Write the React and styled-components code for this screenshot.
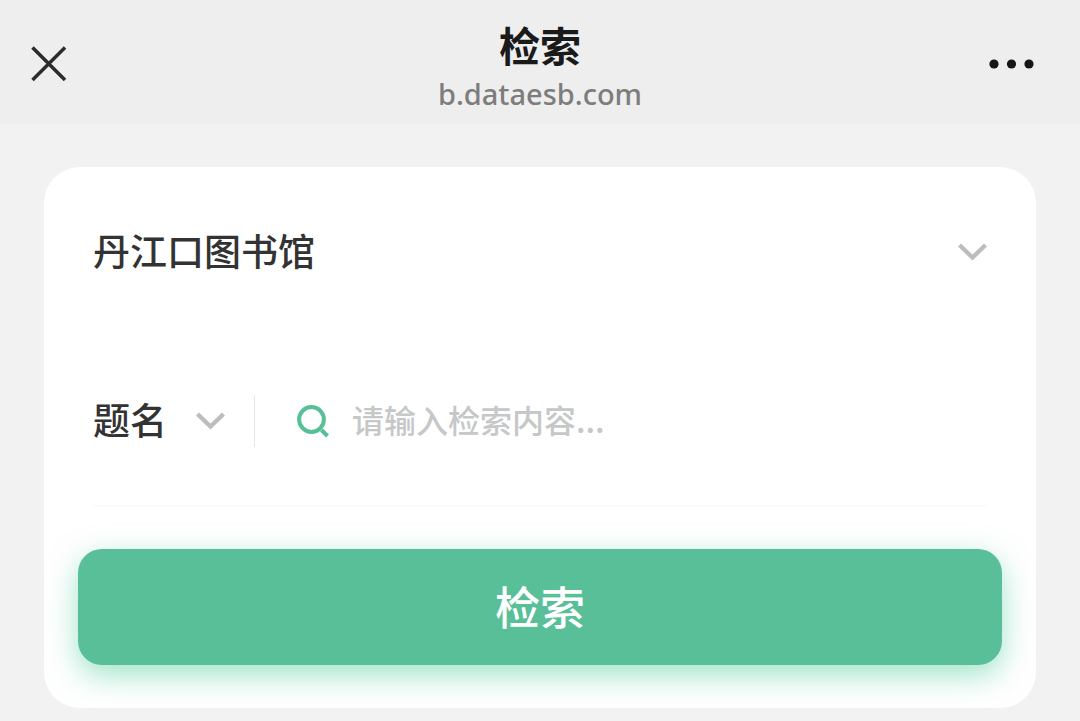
import React, { useState } from 'react';
import styled, { createGlobalStyle, ThemeProvider } from 'styled-components';

const theme = {
  green: '#58bf98',
  text: '#333333',
  muted: '#7d7d7d',
  placeholder: '#c6c8c8',
  arrow: '#bdbdbd',
  page: '#f2f2f2',
  bar: '#eeeeee',
};

const GlobalStyle = createGlobalStyle`
  *, *::before, *::after {
    box-sizing: border-box;
  }
  body {
    margin: 0;
    background-color: ${theme.page};
    color: ${theme.text};
    font-family: 'Noto Sans CJK SC', sans-serif;
    font-weight: 500;
  }
  button, input, select {
    font: inherit;
    color: inherit;
  }
`;

const TopBar = styled.header`
  display: grid;
  grid-template-columns: 1fr auto 1fr;
  align-items: center;
  padding: 18px 30px 14px;
  background-color: ${({ theme }) => theme.bar};
`;

const IconButton = styled.button`
  display: flex;
  justify-self: ${({ $end }) => ($end ? 'end' : 'start')};
  padding: ${({ $end }) => ($end ? '0 15px' : '0')};
  border: none;
  background: none;
  cursor: pointer;
`;

const Heading = styled.div`
  text-align: center;
`;

const Title = styled.h1`
  margin: 0;
  color: #1a1a1a;
  font-size: 41px;
  font-weight: 700;
  line-height: 52px;
`;

const Address = styled.p`
  margin: 8px 0 0;
  color: ${({ theme }) => theme.muted};
  font-family: 'Noto Sans', sans-serif;
  font-size: 29px;
  line-height: 32px;
`;

const Card = styled.form`
  margin: 43px 44px 13px;
  padding: 0 34px 43px;
  border-radius: 36px;
  background-color: #fff;
`;

const Row = styled.div`
  display: flex;
  align-items: center;
  height: 169px;
  margin: 0 15px;
`;

const SearchRow = styled(Row)`
  box-sizing: content-box;
  border-bottom: 2px solid #fafafa;
`;

const SelectLabel = styled.label`
  display: grid;
  flex: ${({ $wide }) => ($wide ? '1' : 'none')};
  align-items: center;

  > * {
    grid-area: 1 / 1;
  }

  svg {
    justify-self: end;
    pointer-events: none;
  }
`;

const Select = styled.select`
  width: 100%;
  margin: 0;
  padding: 0 58px 4px 0;
  border: none;
  outline: none;
  appearance: none;
  background: none;
  font-size: 37px;
  line-height: 54px;
`;

const Separator = styled.span`
  width: 1px;
  height: 52px;
  margin: 0 41px 0 29px;
  background-color: #e6e6e6;
`;

const SearchLabel = styled.label`
  display: flex;
  flex: 1;
  align-items: center;
  gap: 22px;
`;

const SearchInput = styled.input`
  flex: 1;
  min-width: 0;
  padding: 0 0 4px;
  border: none;
  outline: none;
  background: none;
  font-size: 32px;
  line-height: 48px;

  &::placeholder {
    color: ${({ theme }) => theme.placeholder};
    opacity: 1;
  }
`;

const SubmitButton = styled.button`
  display: block;
  width: 100%;
  height: 116px;
  margin-top: 42px;
  padding: 0 0 4px;
  border: none;
  border-radius: 24px;
  background-color: ${({ theme }) => theme.green};
  box-shadow: 0 10px 30px rgba(64, 201, 150, 0.5);
  color: #fff;
  font-size: 45px;
  cursor: pointer;
`;

const CloseIcon = () => (
  <svg width="38" height="38" viewBox="0 0 38 38" fill="none" aria-hidden="true">
    <path d="M2.5 2.5 35 35M35 2.5 2.5 35" stroke="#2b2b2b" strokeWidth="3.5" />
  </svg>
);

const MoreIcon = () => (
  <svg width="46" height="10" viewBox="0 0 46 10" fill="#161616" aria-hidden="true">
    <circle cx="5" cy="5" r="4.6" />
    <circle cx="22.5" cy="5" r="4.6" />
    <circle cx="40" cy="5" r="4.6" />
  </svg>
);

const ArrowIcon = () => (
  <svg width="29" height="20" viewBox="0 0 29 20" fill="none" aria-hidden="true">
    <path d="M1.5 3 14.5 15.5 27.5 3" stroke={theme.arrow} strokeWidth="4.4" />
  </svg>
);

const SearchIcon = () => (
  <svg width="34" height="34" viewBox="0 0 34 34" fill="none" stroke={theme.green} aria-hidden="true">
    <circle cx="15.5" cy="15.5" r="12.4" strokeWidth="4" />
    <path d="M25.5 26 31.5 32" strokeWidth="4.2" />
  </svg>
);

const App = () => {
  const [query, setQuery] = useState('');

  return (
    <ThemeProvider theme={theme}>
      <GlobalStyle />
      <TopBar>
        <IconButton type="button" aria-label="关闭">
          <CloseIcon />
        </IconButton>
        <Heading>
          <Title>检索</Title>
          <Address>b.dataesb.com</Address>
        </Heading>
        <IconButton type="button" aria-label="更多" $end>
          <MoreIcon />
        </IconButton>
      </TopBar>
      <Card onSubmit={(e) => e.preventDefault()}>
        <Row>
          <SelectLabel $wide>
            <Select aria-label="图书馆">
              <option>丹江口图书馆</option>
            </Select>
            <ArrowIcon />
          </SelectLabel>
        </Row>
        <SearchRow>
          <SelectLabel>
            <Select aria-label="检索字段">
              <option>题名</option>
            </Select>
            <ArrowIcon />
          </SelectLabel>
          <Separator />
          <SearchLabel>
            <SearchIcon />
            <SearchInput
              type="text"
              aria-label="检索内容"
              placeholder="请输入检索内容..."
              value={query}
              onChange={(e) => setQuery(e.target.value)}
            />
          </SearchLabel>
        </SearchRow>
        <SubmitButton type="submit">检索</SubmitButton>
      </Card>
    </ThemeProvider>
  );
};

export default App;
